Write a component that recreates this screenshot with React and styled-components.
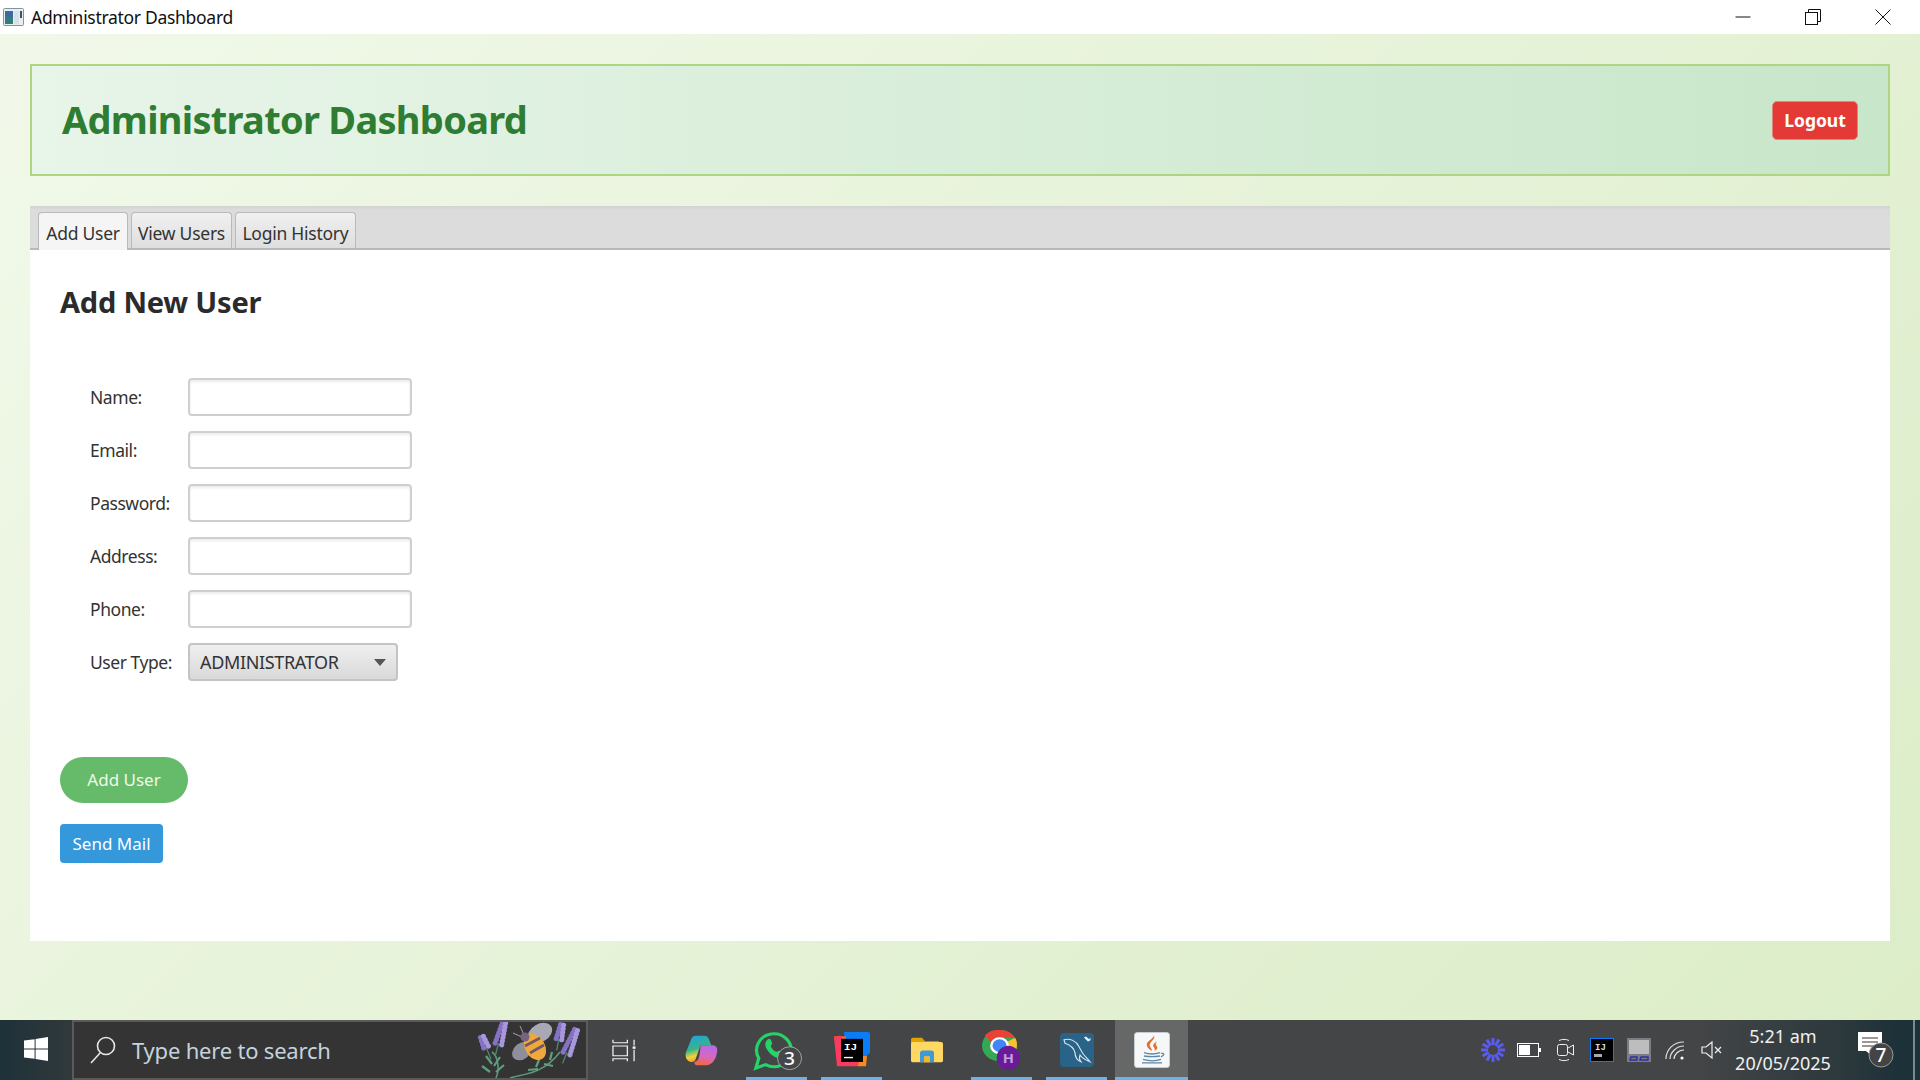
import React from "react";
import styled, { createGlobalStyle } from "styled-components";

const GlobalStyle = createGlobalStyle`
  html, body { margin: 0; padding: 0; height: 100%; }
  body { font-family: "Noto Sans", "Open Sans", sans-serif; overflow: hidden; }
  #root { height: 100%; }
`;

const Screen = styled.div`
  width: 100%;
  height: 100vh;
  display: flex;
  flex-direction: column;
`;

const TitleBar = styled.header`
  height: 34px;
  flex: none;
  background: #fff;
  display: flex;
  align-items: center;
  padding-left: 3px;
  font-size: 17.5px;
  color: #111;
`;

const AppTitle = styled.span`
  margin-left: 7px;
  letter-spacing: -0.3px;
`;

const WindowControls = styled.div`
  margin-left: auto;
  display: flex;
  height: 100%;
  padding-right: 2px;
`;

const WindowButton = styled.button`
  width: 70px;
  border: 0;
  padding: 0;
  background: none;
  display: flex;
  align-items: center;
  justify-content: center;
`;

const Main = styled.main`
  flex: 1;
  min-height: 0;
  display: flex;
  flex-direction: column;
  gap: 30px;
  padding: 30px 30px 79px;
  background: linear-gradient(135deg, #f1f8e9, #dcedc8);
`;

const HeaderCard = styled.section`
  height: 112px;
  flex: none;
  box-sizing: border-box;
  display: flex;
  align-items: center;
  justify-content: space-between;
  padding: 0 30px;
  border: 2px solid #aed581;
  background: linear-gradient(90deg, #e8f5e9, #c8e6c9);
`;

const PageTitle = styled.h1`
  margin: 0 0 2px;
  font-size: 38px;
  font-weight: 700;
  color: #2e7d32;
  letter-spacing: -0.72px;
`;

const LogoutButton = styled.button`
  width: 86px;
  height: 39px;
  border: 1px solid #d98880;
  border-radius: 5px;
  background: #e53935;
  color: #fff;
  font: 700 17.5px "Noto Sans", sans-serif;
  padding: 0;
`;

const TabPane = styled.section`
  flex: 1;
  display: flex;
  flex-direction: column;
  background: #fff;
`;

const TabBar = styled.nav`
  height: 44px;
  flex: none;
  box-sizing: border-box;
  display: flex;
  align-items: flex-end;
  gap: 3px;
  padding-left: 8px;
  background: linear-gradient(#d2d2d2, #dcdcdc 4px);
  border-bottom: 2px solid #b9b9b9;
`;

const Tab = styled.div`
  width: ${(p) => p.$width}px;
  box-sizing: border-box;
  margin-bottom: ${(p) => (p.$active ? "-2px" : "0")};
  height: ${(p) => (p.$active ? "38px" : "36px")};
  padding-top: ${(p) => (p.$active ? "2px" : "4px")};
  display: flex;
  align-items: center;
  justify-content: center;
  font-size: 17.5px;
  letter-spacing: -0.25px;
  color: #333;
  border: 1px solid #b9b9b9;
  border-bottom: 0;
  border-radius: 4px 4px 0 0;
  background: ${(p) =>
    p.$active ? "#f5f5f5" : "linear-gradient(#f0f0f0, #dedede)"};
`;

const TabBody = styled.div`
  flex: 1;
  padding: 33px 30px 0;
`;

const SectionTitle = styled.h2`
  margin: 0;
  font-size: 29px;
  line-height: 38px;
  font-weight: 700;
  color: #2b2b2b;
  letter-spacing: -0.2px;
`;

const FormGrid = styled.div`
  display: grid;
  grid-template-columns: 98px 224px;
  grid-auto-rows: 38px;
  row-gap: 15px;
  align-items: center;
  margin: 57px 0 0 30px;
`;

const FieldLabel = styled.label`
  font-size: 17.5px;
  letter-spacing: -0.45px;
  color: #333;
  margin-bottom: 1px;
`;

const TextInput = styled.input`
  width: 100%;
  height: 38px;
  box-sizing: border-box;
  border: 2px solid #cfcfcf;
  border-radius: 4px;
  background: #fff;
  box-shadow: inset 0 2px 3px rgba(0, 0, 0, 0.08);
  outline: none;
`;

const SelectBox = styled.div`
  width: 210px;
  height: 38px;
  box-sizing: border-box;
  display: flex;
  align-items: center;
  justify-content: space-between;
  padding: 0 10px;
  border: 2px solid #c4c4c4;
  border-radius: 4px;
  background: linear-gradient(#efefef, #d9d9d9);
  font-size: 18px;
  letter-spacing: -0.35px;
  color: #333;
`;

const ActionRow = styled.div`
  display: flex;
  flex-direction: column;
  align-items: flex-start;
  gap: 21px;
  margin-top: 76px;
`;

const PillButton = styled.button`
  width: 128px;
  height: 46px;
  border: 0;
  padding: 0 0 2px;
  border-radius: 23px;
  background: #66bb6a;
  color: #f1f8e9;
  font: 400 17px "Noto Sans", sans-serif;
`;

const MailButton = styled.button`
  width: 103px;
  height: 39px;
  border: 0;
  padding: 0;
  border-radius: 4px;
  background: #3498db;
  color: #fff;
  font: 400 17px "Noto Sans", sans-serif;
`;

const Taskbar = styled.footer`
  height: 60px;
  flex: none;
  display: flex;
  align-items: stretch;
  background: linear-gradient(90deg, #1d3138 0, #31393c 70px, #434547 300px, #434547 1700px, #2c393d 1840px, #1d3138 1900px);
`;

const StartButton = styled.div`
  width: 72px;
  flex: none;
  display: flex;
  align-items: center;
  justify-content: center;
  padding-bottom: 2px;
  box-sizing: border-box;
`;

const SearchBox = styled.div`
  width: 516px;
  flex: none;
  box-sizing: border-box;
  display: flex;
  align-items: center;
  padding: 0 6px 0 16px;
  background: #343434;
  border: 2px solid #5a5a5a;
  overflow: hidden;
`;

const SearchText = styled.span`
  margin-left: 16px;
  font-size: 22px;
  color: #c5d3dd;
  letter-spacing: -0.2px;
`;

const SearchArt = styled.div`
  margin-left: auto;
  display: flex;
  align-self: flex-end;
`;

const TaskGroup = styled.div`
  display: flex;
  gap: 2px;
  margin-left: 2px;
`;

const TaskCell = styled.div`
  position: relative;
  width: 73px;
  box-sizing: border-box;
  display: flex;
  align-items: center;
  justify-content: center;
  padding-left: ${(p) => (p.$nudge > 0 ? p.$nudge : 0)}px;
  padding-right: ${(p) => (p.$nudge < 0 ? -p.$nudge : 0)}px;
  background: ${(p) => (p.$active ? "#666868" : "transparent")};
  &::after {
    content: "";
    display: ${(p) => (p.$open || p.$active ? "block" : "none")};
    position: absolute;
    bottom: 0;
    left: ${(p) => (p.$active ? "0" : "6px")};
    right: ${(p) => (p.$active ? "0" : "6px")};
    height: 3px;
    background: #6cb2e8;
  }
`;

const Tray = styled.div`
  margin-left: auto;
  display: flex;
  align-items: center;
`;

const TraySlot = styled.div`
  width: 36.5px;
  display: flex;
  align-items: center;
  justify-content: center;
`;

const Clock = styled.div`
  width: 104px;
  margin-left: 1px;
  text-align: center;
  color: #f0f0f0;
  font-size: 18px;
  line-height: 27px;
`;

const NoticeSlot = styled.div`
  width: 59px;
  margin-left: 19px;
  display: flex;
  justify-content: flex-start;
  padding-left: 4px;
  box-sizing: border-box;
`;

const DesktopEdge = styled.div`
  width: 7px;
  height: 100%;
  flex: none;
  box-sizing: border-box;
  border-left: 2px solid #7d8a8d;
`;

const AppIcon = () => (
  <svg width="21" height="18" viewBox="0 0 21 18">
    <rect x="0.5" y="0.5" width="20" height="17" rx="1" fill="#e8eef2" stroke="#7d95a6" />
    <rect x="2" y="3" width="8" height="13" fill="#2f7f7a" />
    <rect x="2" y="3" width="8" height="6" fill="#3a6aa0" />
    <rect x="11" y="3" width="5" height="13" fill="#d8e2e6" />
    <rect x="17" y="3" width="2" height="7" fill="#44505a" />
  </svg>
);

const MinIcon = () => (
  <svg width="16" height="16" viewBox="0 0 16 16">
    <path d="M0.5 8h15" stroke="#111" strokeWidth="1" />
  </svg>
);

const RestoreIcon = () => (
  <svg width="16" height="16" viewBox="0 0 16 16" fill="none" stroke="#111">
    <rect x="0.5" y="3.5" width="12" height="12" />
    <path d="M3.5 3.5v-3h12v12h-3" />
  </svg>
);

const CloseIcon = () => (
  <svg width="16" height="16" viewBox="0 0 16 16">
    <path d="M0.5 0.5l15 15M15.5 0.5l-15 15" stroke="#111" />
  </svg>
);

const Caret = () => (
  <svg width="12" height="7" viewBox="0 0 12 7">
    <path d="M0 0h12L6 7z" fill="#555" />
  </svg>
);

const WindowsLogo = () => (
  <svg width="24" height="24" viewBox="0 0 24 24" fill="#fff">
    <path d="M0 3.6l10.6-1.4v9.2H0zM11.6 2L24 0v11.4H11.6zM0 12.6h10.6v9.2L0 20.4zM11.6 12.6H24V24l-12.4-2z" />
  </svg>
);

const SearchIcon = () => (
  <svg width="26" height="28" viewBox="0 0 26 28" fill="none" stroke="#e6e6e6" strokeWidth="1.6">
    <circle cx="16" cy="10" r="8.5" />
    <path d="M10.5 16.5L1 27" />
  </svg>
);

const Sprig = ({ x, y, angle, rows = 6, stem = 30 }) => (
  <g transform={`translate(${x} ${y}) rotate(${angle})`}>
    <path d={`M0 ${rows * 3}V${stem}`} stroke="#4f8a70" strokeWidth="1.3" />
    {Array.from({ length: rows }, (_, i) => (
      <g key={i}>
        <ellipse cx={-1.6 - i * 0.3} cy={i * 3.6} rx="2.6" ry="2.6" fill="#8672c4" />
        <ellipse cx={1.6 + i * 0.3} cy={i * 3.6} rx="2.6" ry="2.6" fill="#a997dc" />
      </g>
    ))}
  </g>
);

const LavenderBee = () => (
  <svg width="104" height="58" viewBox="0 0 104 58">
    <path d="M20 58c4-8 2-22-4-26M34 58c10-4 32-2 50-26" stroke="#5b9a78" strokeWidth="1.6" fill="none" />
    <path d="M16 44l-6-8M18 46l6-9M14 52l-8-6M20 52l8-7M52 50l10-1M60 47l3-7M68 44l9 2M74 40l2-8" stroke="#5f9f7c" strokeWidth="2.2" fill="none" />
    <Sprig x={6} y={17} angle={-22} rows={4} stem={24} />
    <Sprig x={28} y={3} angle={15} rows={7} stem={34} />
    <Sprig x={86} y={5} angle={12} rows={5} stem={26} />
    <Sprig x={100} y={10} angle={22} rows={8} stem={36} />
    <path d="M48 15l-4-9M46 17l-9-4" stroke="#b79aa0" strokeWidth="1" fill="none" />
    <ellipse cx="46" cy="31" rx="11" ry="8" transform="rotate(-40 46 31)" fill="#8e8e9c" />
    <ellipse cx="64" cy="13" rx="13" ry="9" transform="rotate(-30 64 13)" fill="#a9a9b6" />
    <ellipse cx="59" cy="27" rx="10" ry="14" transform="rotate(-30 59 27)" fill="#f0a73c" />
    <path d="M49 26l15-8M54 33l14-8" stroke="#6a5a66" strokeWidth="2.6" />
    <circle cx="49" cy="17" r="4.5" fill="#74647e" />
  </svg>
);

const TaskViewIcon = () => (
  <svg width="24" height="23" viewBox="0 0 25 28" preserveAspectRatio="none" fill="none" stroke="#f2f2f2" strokeWidth="1.3">
    <path d="M1 4.5h15V1M1 1v3.5M1 8.5h15v12H1zM1 27v-3h15v3M23 1v7M23 13v14" />
    <rect x="21.5" y="9" width="3" height="3" fill="#f2f2f2" stroke="none" />
  </svg>
);

const CopilotIcon = () => (
  <svg width="33" height="31" viewBox="0 0 34 36" preserveAspectRatio="none">
    <defs>
      <linearGradient id="copA" x1="0" y1="0" x2="0.3" y2="1">
        <stop offset="0" stopColor="#1f9fe8" />
        <stop offset="0.55" stopColor="#35b58a" />
        <stop offset="0.8" stopColor="#f2d23a" />
        <stop offset="1" stopColor="#f59a2f" />
      </linearGradient>
      <linearGradient id="copB" x1="0.6" y1="0" x2="0.4" y2="1">
        <stop offset="0" stopColor="#b56be8" />
        <stop offset="0.6" stopColor="#d968b8" />
        <stop offset="1" stopColor="#f0683f" />
      </linearGradient>
    </defs>
    <path d="M11 1h9c3 0 4 2 5 5l2 6H16l-5 16c-1 3-3 4-6 3-4-2-5-6-4-11L6 6c1-3 2-5 5-5z" fill="url(#copA)" />
    <path d="M16 12h12c4 0 6 3 5 8-1 8-5 15-11 15h-9c-3 0-4-2-3-4 4-1 5-3 6-19z" fill="url(#copB)" />
  </svg>
);

const WhatsAppIcon = () => (
  <svg width="50" height="42" viewBox="0 0 52 46" preserveAspectRatio="none">
    <path d="M3 43l3-11a18 18 0 1 1 7 7z" fill="none" stroke="#25d366" strokeWidth="3.4" />
    <path d="M14 13c2-3 4-3 5 0l1 3c0 1-2 2-1 4 1 2 3 4 5 5 2 0 3-2 4-1l3 2c2 1 1 3-1 5-3 2-8 0-12-4s-7-10-4-14z" fill="#25d366" />
    <circle cx="38" cy="32" r="12.5" fill="#454749" stroke="#a8a8a8" />
    <text x="38" y="39" textAnchor="middle" fontSize="20" fontFamily="Noto Sans" fontWeight="500" fill="#fff">3</text>
  </svg>
);

const IntelliJIcon = () => (
  <svg width="36" height="36" viewBox="0 0 36 42" preserveAspectRatio="none">
    <path d="M10 0h24c1 0 2 1 2 2v22l-4 5H12z" fill="#0a7cf5" />
    <path d="M0 5h12l-2 30H4z" fill="#f5631f" />
    <path d="M3 40L0 6l6-2 24 32-4 0-2 4z" fill="#fb3a60" />
    <path d="M26 28h7l-1 12H24z" fill="#fb8a1c" />
    <rect x="7" y="8" width="22" height="27" fill="#000" />
    <text x="10" y="21" fontSize="11" fontFamily="Liberation Mono" fontWeight="700" fill="#fff">IJ</text>
    <rect x="10" y="29" width="9" height="1.6" fill="#fff" />
  </svg>
);

const FolderIcon = () => (
  <svg width="32" height="27" viewBox="0 0 32 32" preserveAspectRatio="none">
    <path d="M0 3c0-1 1-2 2-2h9l3 4h14v6H0z" fill="#e0a400" />
    <rect x="0" y="6" width="32" height="24" rx="2" fill="#ffd864" />
    <path d="M9 30V19c0-2 1-3 3-3h8c2 0 3 1 3 3v11h-4v-7h-6v7z" fill="#3d9ad8" />
    <rect x="13" y="23" width="6" height="7" fill="#f0b72f" />
  </svg>
);

const ChromeIcon = () => (
  <svg width="39" height="40" viewBox="0 0 40 46" preserveAspectRatio="none">
    <circle cx="18" cy="18" r="18" fill="#34a853" />
    <path d="M18 0a18 18 0 0 1 16 9H18a9 9 0 0 0-8.5 6L3 6A18 18 0 0 1 18 0z" fill="#ea4335" />
    <path d="M34 9a18 18 0 0 1-8 24l-8-15 16-9z" fill="#fbc02d" />
    <circle cx="18" cy="18" r="8.5" fill="#4285f4" stroke="#fff" strokeWidth="2.5" />
    <ellipse cx="27" cy="32" rx="12" ry="14" fill="#6a1b9a" />
    <text x="27" y="38" textAnchor="middle" fontSize="15" fontFamily="Noto Sans" fontWeight="700" fill="#c6a0e0">H</text>
  </svg>
);

const MySqlIcon = () => (
  <svg width="34" height="34" viewBox="0 0 34 40" preserveAspectRatio="none">
    <rect width="34" height="40" rx="4" fill="#2a6388" />
    <path d="M4 8c6-2 12 1 15 8 2 5 3 9 9 15l2 3c-4-2-8-4-10-8-1 3-1 5 1 8-4-2-6-6-6-11-1-5-5-9-10-11z" fill="none" stroke="#d8e6ee" strokeWidth="1.2" />
    <path d="M26 8l-2-3 2-1 3 3 2-1-1 3-2 1z" fill="#e8eef2" />
  </svg>
);

const JavaIcon = () => (
  <svg width="36" height="36" viewBox="0 0 36 42" preserveAspectRatio="none">
    <rect x="0.5" y="0.5" width="35" height="41" rx="3" fill="#f5f7f8" stroke="#c8d0d6" />
    <path d="M20 4c2 5-6 8-4 13 1 2 2 3 2 5-3-2-6-5-5-9 1-3 6-5 7-9zM23 11c-3 2-5 4-3 7 1 1 1 3 0 4 3-1 4-3 3-5s-2-3 0-6z" fill="#e2702a" />
    <path d="M10 24c5 2 11 2 16 0M10 28c5 1 11 1 16 0M9 32c6 2 13 2 18 0M8 36h20" fill="none" stroke="#5f87a6" strokeWidth="1.6" />
    <path d="M27 25c3-1 4 2 0 4" fill="none" stroke="#5f87a6" strokeWidth="1.4" />
  </svg>
);

const SunIcon = () => (
  <svg width="24" height="24" viewBox="0 0 24 24" stroke="#5a5cf0" strokeWidth="3">
    {[0, 30, 60, 90, 120, 150].map((a) => (
      <path key={a} d="M12 0v24" transform={`rotate(${a} 12 12)`} />
    ))}
    <circle cx="12" cy="12" r="5" fill="#434547" stroke="none" />
  </svg>
);

const BatteryIcon = () => (
  <svg width="24" height="14" viewBox="0 0 24 14" fill="none">
    <rect x="0.5" y="0.5" width="21" height="13" stroke="#fff" />
    <rect x="2" y="2" width="11" height="10" fill="#fff" />
    <rect x="22" y="5" width="2" height="4" fill="#fff" />
  </svg>
);

const CameraIcon = () => (
  <svg width="17" height="24" viewBox="0 0 17 24" fill="none" stroke="#f0f0f0">
    <rect x="0.5" y="6.5" width="10" height="11" rx="2" />
    <path d="M11 10l5.5-3v10L11 14M2 2.5c3-1.5 7-1.5 10 0M2 21.5c3 1.5 7 1.5 10 0" />
  </svg>
);

const IjTrayIcon = () => (
  <svg width="24" height="24" viewBox="0 0 24 24">
    <rect x="0.5" y="0.5" width="23" height="23" fill="#000" stroke="#0a7cf5" />
    <text x="5" y="12" fontSize="9" fontFamily="Liberation Mono" fontWeight="700" fill="#ddd">IJ</text>
    <rect x="4" y="16" width="8" height="3" fill="#aaa" />
  </svg>
);

const TouchpadIcon = () => (
  <svg width="24" height="24" viewBox="0 0 24 24">
    <rect width="24" height="24" fill="#7c7c84" />
    <rect x="2" y="2" width="20" height="14" fill="#bdbdbd" />
    <path d="M3 22l1-3h6v3zM13 22l1-3h7v3z" fill="none" stroke="#2a2f9e" strokeWidth="1.4" />
  </svg>
);

const WifiIcon = () => (
  <svg width="20" height="19" viewBox="0 0 20 19" fill="none" stroke="#e0e0e0" strokeWidth="1.2">
    <path d="M1 18C1 9 8 1 19 1M5 18c0-6 6-13 14-13M9 18c0-4 4-9 10-9" />
    <circle cx="17" cy="17" r="1.6" fill="#fff" stroke="none" />
  </svg>
);

const SpeakerIcon = () => (
  <svg width="21" height="18" viewBox="0 0 21 18" fill="none" stroke="#f0f0f0" strokeWidth="1.2">
    <path d="M1 6v6h4l6 5V1L5 6zM14 6l6 6M20 6l-6 6" />
  </svg>
);

const NoticeIcon = () => (
  <svg width="36" height="36" viewBox="0 0 36 36">
    <path d="M0 0h24v19h-10v5l-6-5H0z" fill="#fff" />
    <path d="M4 6h16M4 10h16M4 14h12" stroke="#333" />
    <circle cx="23" cy="23" r="12" fill="#444" stroke="#9a9a9a" />
    <text x="23" y="30" textAnchor="middle" fontSize="19" fontFamily="Noto Sans" fontWeight="500" fill="#fff">7</text>
  </svg>
);

const fields = ["Name:", "Email:", "Password:", "Address:", "Phone:"];

const taskApps = [
  { icon: <TaskViewIcon />, nudge: -5 },
  { icon: <CopilotIcon /> },
  { icon: <WhatsAppIcon />, open: true, nudge: 3 },
  { icon: <IntelliJIcon />, open: true },
  { icon: <FolderIcon /> },
  { icon: <ChromeIcon />, open: true },
  { icon: <MySqlIcon />, open: true },
  { icon: <JavaIcon />, active: true },
];

const trayIcons = [
  <SunIcon />,
  <BatteryIcon />,
  <CameraIcon />,
  <IjTrayIcon />,
  <TouchpadIcon />,
  <WifiIcon />,
  <SpeakerIcon />,
];

export default function App() {
  return (
    <Screen>
      <GlobalStyle />
      <TitleBar>
        <AppIcon />
        <AppTitle>Administrator Dashboard</AppTitle>
        <WindowControls>
          <WindowButton><MinIcon /></WindowButton>
          <WindowButton><RestoreIcon /></WindowButton>
          <WindowButton><CloseIcon /></WindowButton>
        </WindowControls>
      </TitleBar>
      <Main>
        <HeaderCard>
          <PageTitle>Administrator Dashboard</PageTitle>
          <LogoutButton>Logout</LogoutButton>
        </HeaderCard>
        <TabPane>
          <TabBar>
            <Tab $width={90} $active>Add User</Tab>
            <Tab $width={101}>View Users</Tab>
            <Tab $width={121}>Login History</Tab>
          </TabBar>
          <TabBody>
            <SectionTitle>Add New User</SectionTitle>
            <FormGrid>
              {fields.map((f) => (
                <React.Fragment key={f}>
                  <FieldLabel>{f}</FieldLabel>
                  <TextInput type="text" />
                </React.Fragment>
              ))}
              <FieldLabel>User Type:</FieldLabel>
              <SelectBox>
                ADMINISTRATOR
                <Caret />
              </SelectBox>
            </FormGrid>
            <ActionRow>
              <PillButton>Add User</PillButton>
              <MailButton>Send Mail</MailButton>
            </ActionRow>
          </TabBody>
        </TabPane>
      </Main>
      <Taskbar>
        <StartButton><WindowsLogo /></StartButton>
        <SearchBox>
          <SearchIcon />
          <SearchText>Type here to search</SearchText>
          <SearchArt><LavenderBee /></SearchArt>
        </SearchBox>
        <TaskGroup>
          {taskApps.map((app, i) => (
            <TaskCell key={i} $open={app.open} $active={app.active} $nudge={app.nudge || 0}>
              {app.icon}
            </TaskCell>
          ))}
        </TaskGroup>
        <Tray>
          {trayIcons.map((icon, i) => (
            <TraySlot key={i}>{icon}</TraySlot>
          ))}
          <Clock>
            <div>5:21 am</div>
            <div>20/05/2025</div>
          </Clock>
          <NoticeSlot><NoticeIcon /></NoticeSlot>
          <DesktopEdge />
        </Tray>
      </Taskbar>
    </Screen>
  );
}
